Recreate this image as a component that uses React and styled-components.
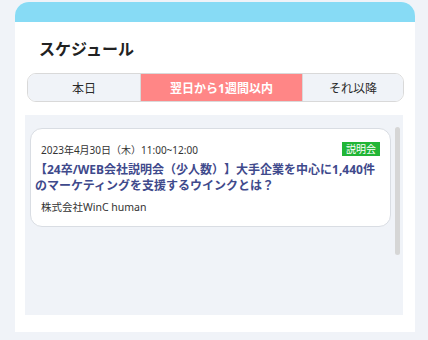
import React from "react"
import styled, { createGlobalStyle } from "styled-components"

const GlobalStyle = createGlobalStyle`
  html, body {
    margin: 0;
    padding: 0;
    background: #f0f3f8;
  }
  body {
    font-family: "Noto Sans", "Noto Sans CJK JP", sans-serif;
    color: #333;
    text-spacing-trim: space-all;
  }
`

const Page = styled.div`
  padding: 2px 13px 0 15px;
`

const Panel = styled.section`
  width: 400px;
  height: 330px;
  background: #fff;
  border-radius: 14px 14px 0 0;
  overflow: hidden;
  display: flex;
  flex-direction: column;
`

const TopBand = styled.div`
  height: 20px;
  background: #87dbf5;
  flex-shrink: 0;
`

const Body = styled.div`
  padding: 16px 11px 0 10px;
  display: flex;
  flex-direction: column;
`

const Heading = styled.h2`
  margin: 0 0 0 14px;
  font-size: 16px;
  line-height: 22px;
  font-weight: 700;
  color: #222;
`

const Tabs = styled.div`
  margin: 13px 0 0 2px;
  height: 29px;
  display: grid;
  grid-template-columns: 112px 162px 1fr;
  border: 1px solid #d9d9d9;
  border-radius: 9px;
  overflow: hidden;
  box-sizing: border-box;
`

const Tab = styled.button`
  border: none;
  border-left: ${p => (p.$first ? "none" : "1px solid #d9d9d9")};
  padding: 0;
  font-family: inherit;
  font-size: 12px;
  font-weight: ${p => (p.$active ? 700 : 400)};
  color: ${p => (p.$active ? "#fff" : "#2a2a2a")};
  background: ${p => (p.$active ? "#ff8686" : "#f0f3f8")};
`

const List = styled.div`
  margin: 13px 1px 0 0;
  height: 200px;
  background: #f0f3f8;
  padding: 13px 3px 0 5px;
  box-sizing: border-box;
  display: flex;
  align-items: flex-start;
  gap: 4px;
`

const Items = styled.div`
  flex: 1;
`

const ScrollThumb = styled.div`
  width: 5px;
  height: 128px;
  margin-top: -1px;
  border-radius: 3px;
  background: #d6d6d6;
`

const EventCard = styled.article`
  background: #fff;
  border: 1px solid #d9dde3;
  border-radius: 12px;
  padding: 13px 10px 12px 10px;
`

const MetaRow = styled.div`
  height: 14px;
  display: flex;
  align-items: center;
  justify-content: space-between;
`

const DateText = styled.span`
  font-size: 10px;
  color: #333;
`

const Badge = styled.span`
  height: 14px;
  padding: 0 4px;
  background: #21b536;
  color: #fff;
  font-size: 10px;
  line-height: 14px;
`

const EventTitle = styled.div`
  margin: 6px -6px 0 -6px;
  font-size: 12px;
  line-height: 16px;
  font-weight: 700;
  color: #3f4a8c;
`

const Company = styled.div`
  margin-top: 6px;
  font-size: 10.5px;
  line-height: 14px;
  color: #333;
`

const tabs = [
  { label: "本日" },
  { label: "翌日から1週間以内", active: true },
  { label: "それ以降" },
]

export default function App() {
  return (
    <Page>
      <GlobalStyle />
      <Panel>
        <TopBand />
        <Body>
          <Heading>スケジュール</Heading>
          <Tabs>
            {tabs.map((t, i) => (
              <Tab key={t.label} $first={i === 0} $active={t.active}>
                {t.label}
              </Tab>
            ))}
          </Tabs>
          <List>
            <Items>
              <EventCard>
                <MetaRow>
                  <DateText>2023年4月30日（木）11:00~12:00</DateText>
                  <Badge>説明会</Badge>
                </MetaRow>
                <EventTitle>
                  【24卒/WEB会社説明会（少人数）】大手企業を中心に1,440件のマーケティングを支援するウインクとは？
                </EventTitle>
                <Company>株式会社WinC human</Company>
              </EventCard>
            </Items>
            <ScrollThumb />
          </List>
        </Body>
      </Panel>
    </Page>
  )
}
